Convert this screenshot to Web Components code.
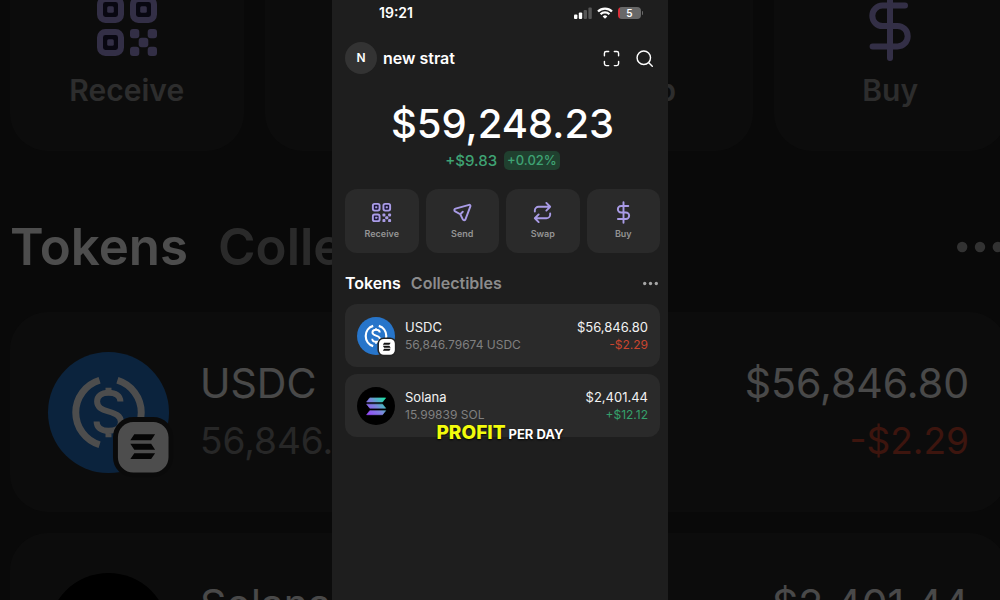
<!DOCTYPE html>
<html lang="en">
<head>
<meta charset="utf-8">
<meta name="viewport" content="width=device-width, initial-scale=1">
<title>Wallet</title>
<style>
  body {
    margin: 0;
    background: #000;
    color: #fff;
    font-family: Inter, "Liberation Sans", sans-serif;
  }
</style>
</head>
<body>
<wallet-stage>
  <wallet-board slot="backdrop" large inert aria-hidden="true"></wallet-board>
  <status-bar time="19:21" battery="5"></status-bar>
  <account-header initial="N">new strat</account-header>
  <balance-summary change="+$9.83" percent="+0.02%">$59,248.23</balance-summary>
  <wallet-board></wallet-board>
  <video-caption slot="caption"><strong slot="accent">PROFIT</strong>PER DAY</video-caption>
</wallet-stage>

<script>
const define = (name, html, setup) => {
  const template = document.createElement('template');
  template.innerHTML = html;

  customElements.define(name, class extends HTMLElement {
    constructor() {
      super();
      this.attachShadow({ mode: 'open' }).appendChild(template.content.cloneNode(true));
    }

    connectedCallback() {
      if (setup) {
        setup(this, this.shadowRoot);
      }
    }
  });
};

const ICONS = {
  receive: `
    <g fill="#1d1838" stroke-width="2">
      <rect x="3" y="3" width="7" height="7" rx="1.8"/>
      <rect x="14" y="3" width="7" height="7" rx="1.8"/>
      <rect x="3" y="14" width="7" height="7" rx="1.8"/>
    </g>
    <g fill="currentColor" stroke="none">
      <rect x="5.4" y="5.4" width="2.2" height="2.2" rx=".5"/>
      <rect x="16.4" y="5.4" width="2.2" height="2.2" rx=".5"/>
      <rect x="5.4" y="16.4" width="2.2" height="2.2" rx=".5"/>
      <rect x="13" y="13" width="3.1" height="3.1" rx="1"/>
      <rect x="18.9" y="13" width="3.1" height="3.1" rx="1"/>
      <rect x="15.9" y="15.9" width="3.2" height="3.2" rx="1"/>
      <rect x="13" y="18.9" width="3.1" height="3.1" rx="1"/>
      <rect x="18.9" y="18.9" width="3.1" height="3.1" rx="1"/>
    </g>`,
  send: '<path d="M18.9 4 4.700 7.900c-1.500.4-1.700 2.200-.4 2.900l5.400 3 2.600 5.300c.7 1.400 2.500 1.200 2.900-.2L20.300 5.400c.2-.9-.5-1.600-1.400-1.400ZM9.700 13.800l2.600-2.600"/>',
  swap: '<path d="M4 11v-1a4 4 0 0 1 4-4h12M16 2l4 4-4 4M20 13v1a4 4 0 0 1-4 4H4M8 14l-4 4 4 4"/>',
  buy: '<path d="M17 5.2H9.500a3.400 3.400 0 0 0 0 6.800h5a3.400 3.400 0 0 1 0 6.800H6.200M12 1.300v21.400"/>',
  scan: '<path d="M2 8V4.500A2.500 2.500 0 0 1 4.500 2H8M16 2h3.500A2.500 2.500 0 0 1 22 4.500V8M22 16v3.500a2.500 2.500 0 0 1-2.500 2.500H16M8 22H4.500A2.500 2.500 0 0 1 2 19.500V16"/>',
  search: '<circle cx="11" cy="11" r="9.500"/><path d="m18 18 5 5"/>',
  more: '<g fill="currentColor" stroke="none"><circle cx="2.700" cy="12" r="2.700"/><circle cx="12" cy="12" r="2.700"/><circle cx="21.300" cy="12" r="2.700"/></g>'
};

const COINS = {
  usdc: `
    <circle cx="61" cy="61" r="61" fill="#2775ca"/>
    <g fill="none" stroke="#fff" stroke-width="7">
      <path d="M52 28.500a34 34 0 0 0 0 65M70 28.500a34 34 0 0 1 0 65"/>
      <path stroke-width="6" d="M73 50c0-6-5-9-12-9s-11.500 3.500-11.500 9c0 6 5 8 11.500 10s12.500 4 12.500 10.500c0 5.500-5 9-12.500 9S49 76 49 70M61 36v8M61 77v9"/>
    </g>
    <rect x="68" y="68" width="56" height="56" rx="18" fill="#fff" stroke="#242424" stroke-width="5"/>
    <g fill="#111">
      <path d="m87 83h21l-4 6h-21zM83 92.500h21l4 6h-21zM87 102h21l-4 6h-21z"/>
    </g>`,
  sol: `
    <defs>
      <linearGradient id="sol" x1="30" y1="88" x2="90" y2="34" gradientUnits="userSpaceOnUse">
        <stop offset="0" stop-color="#9945ff"/>
        <stop offset=".5" stop-color="#7c86dc"/>
        <stop offset="1" stop-color="#19e8a5"/>
      </linearGradient>
    </defs>
    <circle cx="61" cy="61" r="61" fill="#000"/>
    <path fill="url(#sol)" stroke="url(#sol)" stroke-width="2" stroke-linejoin="round" d="M41 35h51l-10 13H31zM31 55h51l10 13H41zM41 76h51l-10 13H31z"/>`
};

define('wallet-icon', `
  <style>
    :host {
      display: block;
      width: var(--icon-size, 20px);
      height: var(--icon-size, 20px);
    }

    svg {
      display: block;
      width: 100%;
      height: 100%;
      overflow: visible;
      fill: none;
      stroke: currentColor;
      stroke-width: 2;
      stroke-linecap: round;
      stroke-linejoin: round;
    }
  </style>
  <svg viewBox="0 0 24 24" aria-hidden="true"></svg>
`, (host, root) => {
  root.querySelector('svg').innerHTML = ICONS[host.getAttribute('name')];
});

define('coin-logo', `
  <style>
    :host {
      display: block;
      flex: none;
      width: var(--coin-size);
      height: var(--coin-size);
    }

    svg {
      display: block;
      width: 100%;
      height: 100%;
      overflow: visible;
    }
  </style>
  <svg viewBox="0 0 122 122" aria-hidden="true"></svg>
`, (host, root) => {
  root.querySelector('svg').innerHTML = COINS[host.getAttribute('name')];
});

define('wallet-stage', `
  <style>
    :host {
      display: grid;
      grid-template: 100vh / 100%;
      justify-items: center;
      overflow: hidden;
    }

    .backdrop,
    main {
      grid-area: 1 / 1;
    }

    .backdrop {
      width: 106vw;
      opacity: .3;
      background: #1e1e1e;
    }

    main {
      position: relative;
      box-sizing: border-box;
      width: 33vw;
      min-width: 336px;
      padding: 0 8px 0 13px;
      background: #1e1e1e;
    }
  </style>
  <div class="backdrop"><slot name="backdrop"></slot></div>
  <main>
    <slot></slot>
    <slot name="caption"></slot>
  </main>
`);

define('status-bar', `
  <style>
    :host {
      display: flex;
      align-items: center;
      justify-content: space-between;
      height: 25px;
      padding: 0 17px 0 34px;
      font-size: 14px;
      font-weight: 600;
    }

    .signals {
      display: flex;
      align-items: center;
      gap: 5px;
    }

    svg {
      display: block;
    }

    .battery {
      display: flex;
      align-items: center;
      gap: 1px;
    }

    .level {
      box-sizing: border-box;
      width: 23px;
      height: 12px;
      border-radius: 4px;
      background: linear-gradient(90deg, #d9303a 2px, #686868 2px);
      font-size: 10px;
      line-height: 12px;
      text-align: center;
    }

    .battery::after {
      content: "";
      width: 1px;
      height: 4px;
      border-radius: 0 1px 1px 0;
      background: #686868;
    }
  </style>
  <time></time>
  <div class="signals">
    <svg width="18" height="12" viewBox="0 0 18 12" fill="#fff" aria-hidden="true">
      <rect x="0" y="7.500" width="3.400" height="4.500" rx="1"/>
      <rect x="4.800" y="5.500" width="3.400" height="6.500" rx="1"/>
      <rect x="9.600" y="3" width="3.400" height="9" rx="1" fill="#555"/>
      <rect x="14.400" y="0.500" width="3.400" height="11.500" rx="1" fill="#555"/>
    </svg>
    <svg width="16" height="12" viewBox="0 0 16 12" fill="none" stroke="#fff" stroke-width="2.300" aria-hidden="true">
      <path d="M1 4.500a10 10 0 0 1 14 0M3.600 7.300a6.200 6.200 0 0 1 8.800 0"/>
      <path d="M8 11.800 5.700 9.400a3.300 3.300 0 0 1 4.600 0z" fill="#fff" stroke="none"/>
    </svg>
    <div class="battery"><span class="level"></span></div>
  </div>
`, (host, root) => {
  root.querySelector('time').textContent = host.getAttribute('time');
  root.querySelector('.level').textContent = host.getAttribute('battery');
});

define('account-header', `
  <style>
    :host {
      display: flex;
      align-items: center;
      gap: 6px;
      margin-top: 17px;
      padding-right: 7px;
      font-size: 16px;
      font-weight: 600;
    }

    .avatar {
      width: 32px;
      height: 32px;
      border-radius: 50%;
      background: #333;
      font-size: 12px;
      line-height: 32px;
      text-align: center;
    }

    .name {
      flex: 1;
    }

    button {
      padding: 0;
      border: 0;
      background: none;
      color: inherit;
      --icon-size: 17px;
    }

    .tools {
      display: flex;
      gap: 16px;
    }
  </style>
  <span class="avatar"></span>
  <span class="name"><slot></slot></span>
  <div class="tools">
    <button aria-label="Scan"><wallet-icon name="scan"></wallet-icon></button>
    <button aria-label="Search"><wallet-icon name="search"></wallet-icon></button>
  </div>
`, (host, root) => {
  root.querySelector('.avatar').textContent = host.getAttribute('initial');
});

define('balance-summary', `
  <style>
    :host {
      display: block;
      margin: 25px 0 18px;
      text-align: center;
    }

    .total {
      font-size: 40px;
      font-weight: 500;
      line-height: 50px;
    }

    .delta {
      display: flex;
      align-items: center;
      justify-content: center;
      gap: 7px;
      height: 22px;
      color: #3fa374;
      font-size: 15px;
      font-weight: 500;
    }

    .percent {
      padding: 0 3px;
      border-radius: 5px;
      background: #20402f;
      font-size: 13px;
      line-height: 19px;
    }
  </style>
  <div class="total"><slot></slot></div>
  <div class="delta"><span class="change"></span><span class="percent"></span></div>
`, (host, root) => {
  root.querySelector('.change').textContent = host.getAttribute('change');
  root.querySelector('.percent').textContent = host.getAttribute('percent');
});

define('action-tile', `
  <style>
    :host {
      display: block;
    }

    button {
      display: flex;
      flex-direction: column;
      align-items: center;
      justify-content: center;
      gap: var(--tile-inner-gap);
      width: 100%;
      height: var(--tile-height);
      padding: 0 0 var(--tile-foot);
      border: 0;
      border-radius: var(--tile-radius);
      background: #2a2a2a;
      color: #949494;
      font-family: inherit;
      font-size: var(--label-size);
      font-weight: 600;
      line-height: var(--label-line);
    }

    wallet-icon {
      color: #a99be6;
    }
  </style>
  <button><wallet-icon></wallet-icon><slot></slot></button>
`, (host, root) => {
  const icon = document.createElement('wallet-icon');
  icon.setAttribute('name', host.getAttribute('icon'));
  root.querySelector('wallet-icon').replaceWith(icon);
});

define('board-tabs', `
  <style>
    :host {
      display: flex;
      align-items: center;
      gap: var(--tab-gap);
      margin: var(--tab-margin);
      --icon-size: var(--more-size);
    }

    button {
      padding: 0;
      border: 0;
      background: none;
      color: #8c8c8c;
      font-family: inherit;
      font-size: var(--tab-size);
      font-weight: 600;
      line-height: var(--tab-line);
    }

    button[aria-selected="true"] {
      color: #fff;
    }

    .more {
      margin-left: auto;
      margin-right: var(--more-margin);
      color: #a6a6a6;
    }
  </style>
  <button role="tab" aria-selected="true">Tokens</button>
  <button role="tab" aria-selected="false">Collectibles</button>
  <button class="more" aria-label="More"><wallet-icon name="more"></wallet-icon></button>
`);

define('asset-row', `
  <style>
    :host {
      display: flex;
      align-items: center;
      gap: var(--row-inner-gap);
      height: var(--row-height);
      padding: 0 var(--row-padding);
      border-radius: var(--tile-radius);
      background: #2a2a2a;
      font-size: var(--row-size);
      line-height: var(--row-line);
    }

    .text {
      flex: 1;
      color: #f2f2f2;
    }

    .value {
      flex: none;
      text-align: right;
    }

    small {
      display: block;
      color: #808080;
      font-size: var(--sub-size);
    }

    .change {
      color: #35a06b;
    }

    :host([down]) .change {
      color: #c9452f;
    }
  </style>
  <slot name="logo"></slot>
  <div class="text"><slot></slot><small class="held"></small></div>
  <div class="text value"><span class="worth"></span><small class="change"></small></div>
`, (host, root) => {
  ['held', 'worth', 'change'].forEach((key) => {
    root.querySelector('.' + key).textContent = host.getAttribute(key);
  });
});

define('wallet-board', `
  <style>
    :host {
      display: block;
      --icon-size: 23px;
      --tile-height: 64px;
      --tile-gap: 7px;
      --tile-radius: 12px;
      --tile-inner-gap: 4px;
      --tile-foot: 2px;
      --label-size: 9px;
      --label-line: 12px;
      --tab-size: 16px;
      --tab-line: 22px;
      --tab-gap: 10px;
      --tab-margin: 19px 0 10px;
      --more-size: 15px;
      --more-margin: 2px;
      --row-height: 63px;
      --row-gap: 7px;
      --row-inner-gap: 10px;
      --row-padding: 12px;
      --row-size: 13px;
      --sub-size: 12px;
      --row-line: 18px;
      --coin-size: 38px;
    }

    /* the enlarged copy bleeds off the top of the stage */
    :host([large]) {
      margin-top: -51px;
      padding: 0 23px 0 40px;
      --icon-size: 72px;
      --tile-height: 202px;
      --tile-gap: 21px;
      --tile-radius: 38px;
      --tile-inner-gap: 11px;
      --tile-foot: 4px;
      --label-size: 30px;
      --label-line: 34px;
      --tab-size: 51px;
      --tab-line: 64px;
      --tab-gap: 30px;
      --tab-margin: 64px 0 33px;
      --more-size: 46px;
      --more-margin: 4px;
      --row-height: 200px;
      --row-gap: 21px;
      --row-inner-gap: 31px;
      --row-padding: 38px;
      --row-size: 41px;
      --sub-size: 37px;
      --row-line: 58px;
      --coin-size: 121px;
    }

    .actions {
      display: grid;
      grid-template-columns: repeat(4, 1fr);
      gap: var(--tile-gap);
    }

    .assets {
      display: grid;
      gap: var(--row-gap);
    }
  </style>
  <div class="actions">
    <action-tile icon="receive">Receive</action-tile>
    <action-tile icon="send">Send</action-tile>
    <action-tile icon="swap">Swap</action-tile>
    <action-tile icon="buy">Buy</action-tile>
  </div>
  <board-tabs></board-tabs>
  <div class="assets">
    <asset-row held="56,846.79674 USDC" worth="$56,846.80" change="-$2.29" down>
      <coin-logo slot="logo" name="usdc"></coin-logo>USDC
    </asset-row>
    <asset-row held="15.99839 SOL" worth="$2,401.44" change="+$12.12">
      <coin-logo slot="logo" name="sol"></coin-logo>Solana
    </asset-row>
  </div>
`);

define('video-caption', `
  <style>
    :host {
      position: absolute;
      top: 421px;
      left: 0;
      right: 0;
      display: flex;
      align-items: baseline;
      justify-content: center;
      gap: 3px;
      font-size: 13px;
      font-weight: 700;
      line-height: 24px;
      text-shadow: 0 1px 2px #000;
    }

    ::slotted(strong) {
      color: #f2fb0c;
      font-size: 19px;
      font-weight: 800;
    }
  </style>
  <slot name="accent"></slot><slot></slot>
`);
</script>
</body>
</html>
